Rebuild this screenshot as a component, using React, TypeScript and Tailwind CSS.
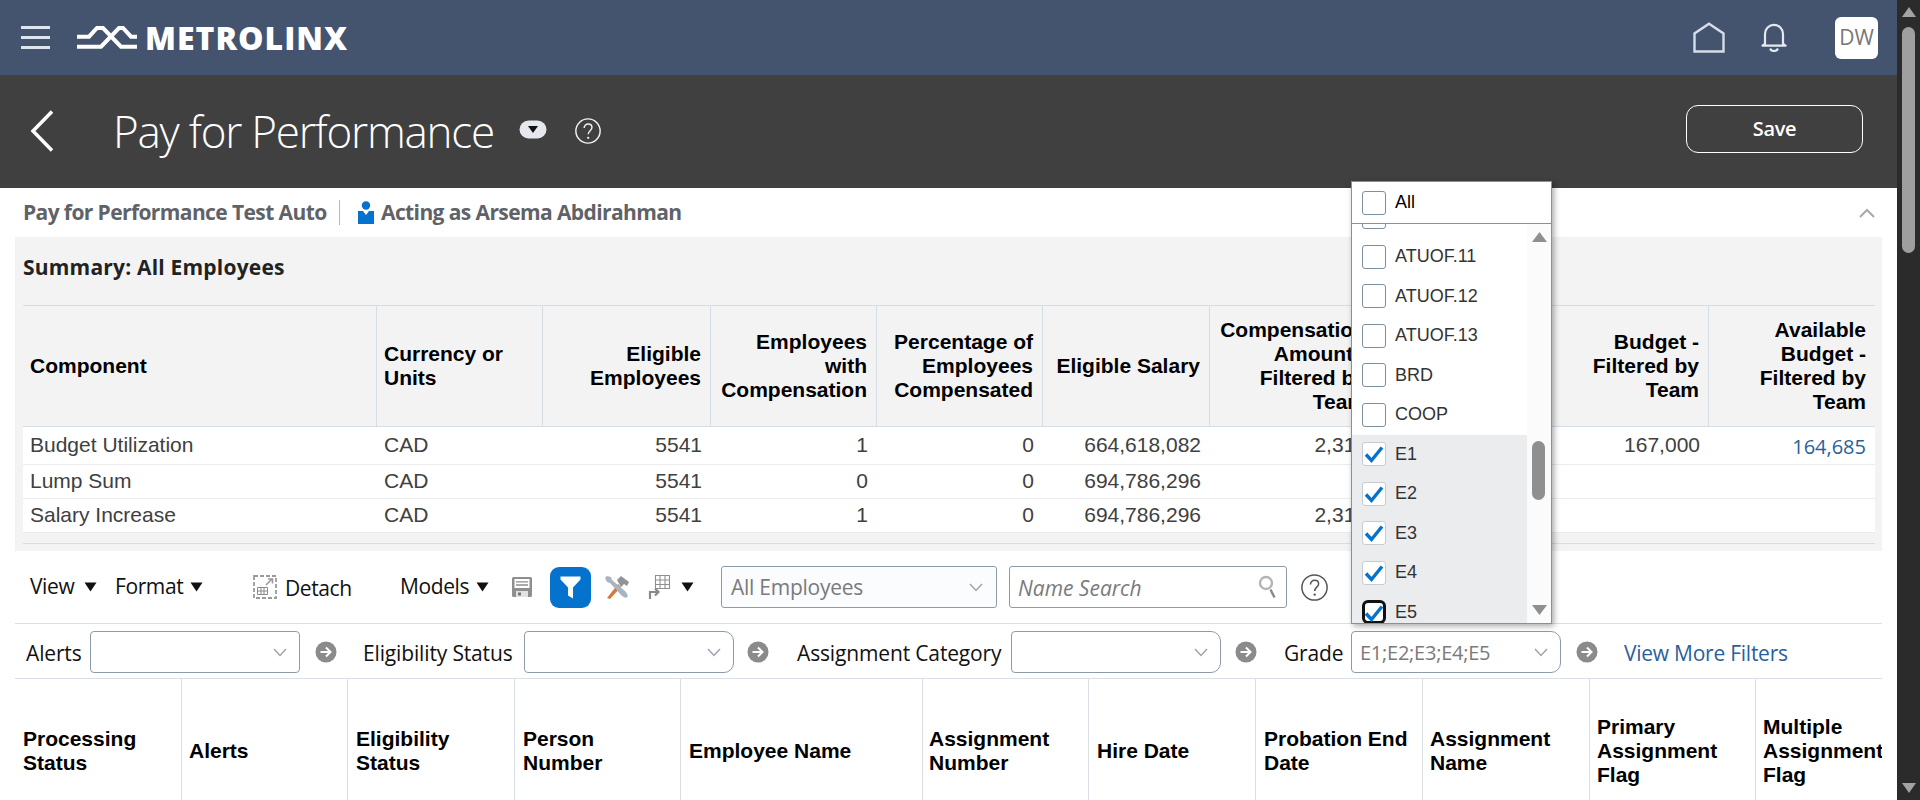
import React from "react";

const seg = "font-['Open_Sans','Noto_Sans',sans-serif]";
const ari = "font-['Liberation_Sans',Arial,sans-serif]";

function Tri({ className = "" }: { className?: string }) {
  return (
    <svg width="13" height="10" viewBox="0 0 13 10" className={"shrink-0 " + className}>
      <path d="M0.500 0.500h12L6.500 9.500z" fill="#111" />
    </svg>
  );
}
function Chev({ color = "#9aa3ad" }: { color?: string }) {
  return (
    <svg width="14" height="9" viewBox="0 0 14 9" className="shrink-0">
      <path d="M1 1l6 6.500L13 1" fill="none" stroke={color} strokeWidth="1.400" />
    </svg>
  );
}
function Go({ className = "" }: { className?: string }) {
  return (
    <svg width="22" height="22" viewBox="0 0 22 22" className={"shrink-0 " + className}>
      <circle cx="11" cy="11" r="10.500" fill="#8b8b8b" />
      <path d="M5.500 11h10M11 6.500l4.500 4.500-4.500 4.500" fill="none" stroke="#fff" strokeWidth="2" />
    </svg>
  );
}
function Help({ size = 27, color = "#555" }: { size?: number; color?: string }) {
  return (
    <svg width={size} height={size} viewBox="0 0 27 27" className="shrink-0">
      <circle cx="13.500" cy="13.500" r="12.600" fill="none" stroke={color} strokeWidth="1.500" />
      <path d="M9.500 10.500c0-2.600 1.800-4.200 4.100-4.200 2.400 0 4 1.600 4 3.600 0 3-3.900 3.600-3.900 7" fill="none" stroke={color} strokeWidth="1.500" />
      <circle cx="13.700" cy="20.600" r="1.200" fill={color} />
    </svg>
  );
}
function Box({ on, focus }: { on?: boolean; focus?: boolean }) {
  return (
    <span
      className={
        "relative block w-[24px] h-[24px] shrink-0 rounded-[3px] bg-white " +
        (focus ? "border-[3px] border-[#111] rounded-[6px]" : on ? "border border-[#c6ccd2]" : "border border-[#7e8f9e]")
      }
    >
      {on && (
        <svg width="22" height="20" viewBox="0 0 22 20" className={"absolute " + (focus ? "left-[-2px] top-0" : "left-0 top-[1px]")}>
          <path d="M3 10.500l5.500 6L19 3.500" fill="none" stroke="#0572ce" strokeWidth="3.400" />
        </svg>
      )}
    </span>
  );
}

const sumCols: { t: string[]; left?: boolean; w: number }[] = [
  { t: ["Component"], left: true, w: 354 },
  { t: ["Currency or", "Units"], left: true, w: 166 },
  { t: ["Eligible", "Employees"], w: 168 },
  { t: ["Employees", "with", "Compensation"], w: 166 },
  { t: ["Percentage of", "Employees", "Compensated"], w: 166 },
  { t: ["Eligible Salary"], w: 167 },
  { t: ["Compensation", "Amount -", "Filtered by", "Team"], w: 166 },
  { t: ["Budget"], w: 166 },
  { t: ["Budget -", "Filtered by", "Team"], w: 167 },
  { t: ["Available", "Budget -", "Filtered by", "Team"], w: 166 },
];
const sumRows: { h: string; c: string[] }[] = [
  { h: "h-[38px]", c: ["Budget Utilization", "CAD", "5541", "1", "0", "664,618,082", "2,315", "", "167,000", "164,685"] },
  { h: "h-[34px]", c: ["Lump Sum", "CAD", "5541", "0", "0", "694,786,296", "", "", "", ""] },
  { h: "h-[34px]", c: ["Salary Increase", "CAD", "5541", "1", "0", "694,786,296", "2,315", "", "", ""] },
];

const empCols: { t: string[]; w: string; pl: string }[] = [
  { t: ["Processing", "Status"], w: "w-[167px]", pl: "pl-[8px]" },
  { t: ["Alerts"], w: "w-[166px]", pl: "pl-[7px]" },
  { t: ["Eligibility", "Status"], w: "w-[167px]", pl: "pl-[8px]" },
  { t: ["Person", "Number"], w: "w-[166px]", pl: "pl-[8px]" },
  { t: ["Employee Name"], w: "w-[242px]", pl: "pl-[8px]" },
  { t: ["Assignment", "Number"], w: "w-[166px]", pl: "pl-[6px]" },
  { t: ["Hire Date"], w: "w-[167px]", pl: "pl-[8px]" },
  { t: ["Probation End", "Date"], w: "w-[167px]", pl: "pl-[8px]" },
  { t: ["Assignment", "Name"], w: "w-[167px]", pl: "pl-[7px]" },
  { t: ["Primary", "Assignment", "Flag"], w: "w-[166px]", pl: "pl-[7px]" },
  { t: ["Multiple", "Assignment", "Flag"], w: "w-[127px]", pl: "pl-[7px]" },
];

function Filter({ label, labelW, value, cut, gap }: { label: string; labelW: string; value?: string; cut?: boolean; gap: string }) {
  return (
    <div className="flex items-center">
      <span className={labelW + " whitespace-nowrap pt-[3px] text-[21px] tracking-[-0.15px] text-[#111] " + seg}>{label}</span>
      <div
        className={
          gap +
          " w-[210px] h-[42px] flex items-center justify-between pl-[8px] pr-[12px] bg-white border border-[#8d9ba8] rounded-[4px] " +
          (cut ? "rounded-r-[10px]" : "")
        }
      >
        <span className={"pt-[2px] text-[20px] tracking-[-0.25px] text-[#7a7a7a] " + seg}>{value}</span>
        <Chev />
      </div>
    </div>
  );
}

const items: { t: string; on?: boolean; focus?: boolean }[] = [
  { t: "ATUOF.11" },
  { t: "ATUOF.12" },
  { t: "ATUOF.13" },
  { t: "BRD" },
  { t: "COOP" },
  { t: "E1", on: true },
  { t: "E2", on: true },
  { t: "E3", on: true },
  { t: "E4", on: true },
  { t: "E5", on: true, focus: true },
];

function Dropdown() {
  return (
    <div className={"absolute left-[1351px] top-[181px] w-[201px] h-[443px] bg-white border border-[#7e93a6] shadow-[2px_2px_6px_rgba(0,0,0,0.35)] flex flex-col overflow-hidden " + ari}>
      <div className="h-[42px] shrink-0 flex items-center pl-[10px] gap-[9px] border-b border-[#7e93a6] text-[18px] text-black">
        <Box /> <span>All</span>
      </div>
      <div className="flex-1 flex min-h-0">
        <div className="w-[175px] flex flex-col overflow-hidden">
          <div className="h-[13px] shrink-0 relative overflow-hidden">
            <span className="absolute left-[10px] top-[-19px] w-[24px] h-[24px] border border-[#7e8f9e] rounded-[3px]" />
          </div>
          {items.map((it) => (
            <div key={it.t} className={"h-[39.500px] shrink-0 flex items-center pl-[10px] gap-[9px] text-[18px] text-[#333] " + (it.on ? "bg-[#ebecee]" : "bg-white")}>
              <Box on={it.on} focus={it.focus} />
              <span>{it.t}</span>
            </div>
          ))}
        </div>
        <div className="flex-1 bg-[#fbfbfb] relative flex flex-col items-center justify-between py-[8px]">
          <svg width="15" height="10" viewBox="0 0 15 10"><path d="M7.500 0L15 10H0z" fill="#8f8f8f" /></svg>
          <svg width="15" height="10" viewBox="0 0 15 10"><path d="M7.500 10L15 0H0z" fill="#8f8f8f" /></svg>
          <div className="absolute left-[5px] top-[217px] w-[13px] h-[59px] rounded-[7px] bg-[#8f8f8f]" />
        </div>
      </div>
    </div>
  );
}

export default function App() {
  return (
    <div className="relative flex w-[1920px] h-[800px] overflow-hidden bg-white">
      <div className="w-[1897px] h-[800px] shrink-0 flex flex-col overflow-hidden">
        {/* blue bar */}
        <div className="h-[75px] shrink-0 bg-[#44546f] flex items-center">
          <div className="ml-[21px] w-[29px] flex flex-col gap-[7.500px]">
            <span className="block h-[2.500px] bg-[#dfe5ee]" />
            <span className="block h-[2.500px] bg-[#dfe5ee]" />
            <span className="block h-[2.500px] bg-[#dfe5ee]" />
          </div>
          <svg width="62" height="25" viewBox="0 0 60 25" className="ml-[26px]">
            <g fill="none" stroke="#fff" strokeWidth="4">
              <path d="M0 11.700H12L20 3H26L44 21.700H60" />
              <path d="M0 21.700H24L42 3H46L54 11.700H60" />
            </g>
          </svg>
          <span className="ml-[7px] text-[32px] leading-none font-extrabold text-white tracking-[1px] font-['Open_Sans',sans-serif]">METROLINX</span>
          <div className="flex-1" />
          <svg width="32" height="31" viewBox="0 0 32 31" className="mr-[36px]">
            <path d="M1.500 29.500V11.500L16 1.800l14.500 9.700v18z" fill="none" stroke="#d5deea" strokeWidth="2.400" />
          </svg>
          <svg width="26" height="29" viewBox="0 0 26 29" className="mr-[48px]">
            <path d="M4 21V11c0-5.200 4-9.200 9-9.200s9 4 9 9.200v10l2.600 1.600H1.400z" fill="none" stroke="#e4e9f1" strokeWidth="2.200" strokeLinejoin="round" />
            <path d="M9 25.600c1 1.800 2.400 2.400 4 2.400s3-.6 4-2.400" fill="none" stroke="#e4e9f1" strokeWidth="2.200" />
          </svg>
          <div className={"w-[43px] h-[42px] mr-[19px] rounded-[6px] bg-white flex items-center justify-center text-[21px] text-[#777] " + seg}>DW</div>
        </div>
        {/* dark bar */}
        <div className="h-[113px] shrink-0 bg-[#404040] flex items-center">
          <svg width="24" height="42" viewBox="0 0 24 42" className="ml-[30px] mb-[2px]">
            <path d="M22 1.500L3 21l19 19.500" fill="none" stroke="#fff" strokeWidth="3.500" />
          </svg>
          <span className={"ml-[59px] mb-[2px] w-[379px] whitespace-nowrap text-[44px] font-light text-white leading-none tracking-[-1.250px] " + seg}>Pay for Performance</span>
          <svg width="28" height="19" viewBox="0 0 28 19" className="ml-[27px] mb-[4px]">
            <rect x="0.500" y="0.500" width="27" height="18" rx="9" fill="#e5e9ee" />
            <path d="M9 6h10l-5 7z" fill="#111" />
          </svg>
          <span className="ml-[28px] flex mb-[2px]"><Help size={26} color="#f0f0f0" /></span>
          <div className="flex-1" />
          <div className={"w-[177px] h-[48px] mr-[34px] mb-[5px] rounded-[12px] border border-white flex items-center justify-center text-[20px] font-semibold tracking-[-0.3px] text-white " + seg}>Save</div>
        </div>
        {/* context row */}
        <div className={"h-[49px] shrink-0 flex items-center pl-[23px] text-[21px] tracking-[-0.6px] font-bold text-[#5f6368] " + seg}>
          <span className="w-[301px] whitespace-nowrap">Pay for Performance Test Auto</span>
          <span className="ml-[15px] w-px h-[25px] bg-[#b9b9a8]" />
          <svg width="16" height="23" viewBox="0 0 16 23" className="ml-[18px]">
            <circle cx="8" cy="4.500" r="4.200" fill="#0572ce" />
            <path d="M0 10h5l3 4 3-4h5v13H0z" fill="#0572ce" />
          </svg>
          <span className="ml-[7px] whitespace-nowrap">Acting as Arsema Abdirahman</span>
          <div className="flex-1" />
          <svg width="16" height="10" viewBox="0 0 16 10" className="mr-[22px]">
            <path d="M1 9l7-7 7 7" fill="none" stroke="#a8a8a8" strokeWidth="2" />
          </svg>
        </div>
        {/* summary panel */}
        <div className="ml-[15px] w-[1867px] h-[314px] shrink-0 bg-[#f3f3f3] flex flex-col pl-[8px]">
          <div className={"h-[68px] shrink-0 flex items-center text-[21px] tracking-[0.2px] font-bold text-[#222] pb-[7px] " + seg}>Summary: All Employees</div>
          <div className="w-[1852px]">
            <div className="flex h-[122px] border-y border-[#d5dde5]">
              {sumCols.map((c, i) => (
                <div
                  key={i}
                  style={{ width: c.w }}
                  className={"shrink-0 pl-[7px] pr-[9px] flex flex-col justify-center text-[21px] leading-[24px] font-bold text-black " + ari + " " + (c.left ? "items-start" : "items-end") + (i < sumCols.length - 1 ? " border-r border-[#d5dde5]" : "")}
                >
                  {c.t.map((l) => <span key={l} className="whitespace-nowrap">{l}</span>)}
                </div>
              ))}
            </div>
            {sumRows.map((r, ri) => (
              <div key={ri} className={"flex bg-white border-b border-[#ececec] " + r.h}>
                {r.c.map((v, i) => (
                  <div
                    key={i}
                    style={{ width: sumCols[i].w }}
                    className={
                      "shrink-0 pl-[7px] pr-[9px] flex items-center whitespace-nowrap " +
                      (i === 9
                        ? seg + " text-[20px] pt-[3px] text-[#2a5f9e] justify-end"
                        : ari + " text-[21px] pb-[2px] text-[#404040]" + (sumCols[i].left ? " justify-start" : " justify-end"))
                    }
                  >
                    {v}
                  </div>
                ))}
              </div>
            ))}
            <div className="h-[10px]" />
            <div className="h-px bg-[#d5dde5]" />
          </div>
        </div>
        {/* toolbar */}
        <div className={"ml-[15px] w-[1867px] h-[73px] shrink-0 border-b border-[#d9dfe5] flex items-center text-[21px] tracking-[-0.4px] text-[#111] " + seg}>
          <span className="ml-[15px] w-[45px]">View</span>
          <Tri className="ml-[9px]" />
          <span className="ml-[18px] w-[66px] whitespace-nowrap">Format</span>
          <Tri className="ml-[9px]" />
          <svg width="24" height="24" viewBox="0 0 24 24" className="ml-[50px] shrink-0">
            <rect x="1" y="1" width="22" height="22" fill="none" stroke="#9a9a9a" strokeWidth="1.800" strokeDasharray="4 2" />
            <path d="M13 10l6-6M15 4h4.500v4.500" fill="none" stroke="#9a9a9a" strokeWidth="1.600" />
            <path d="M4.500 12.500h10v7h-10zM4.500 16h10M8 12.500v7M11 12.500v7" fill="none" stroke="#8a8a8a" strokeWidth="1" />
          </svg>
          <span className="ml-[8px] mt-[3px] w-[66px]">Detach</span>
          <span className="ml-[49px] w-[67px]">Models</span>
          <Tri className="ml-[9px]" />
          <svg width="22" height="22" viewBox="0 0 22 22" className="ml-[22px] shrink-0">
            <path d="M1 2.500A1.500 1.500 0 0 1 2.500 1h17A1.500 1.500 0 0 1 21 2.500v17a1.500 1.500 0 0 1-1.500 1.500h-17A1.500 1.500 0 0 1 1 19.500z" fill="#8f8f8f" />
            <rect x="3.500" y="3" width="15" height="9" fill="#fff" />
            <path d="M5 5.800h12M5 9h12" stroke="#8f8f8f" strokeWidth="1.300" />
            <rect x="5" y="15" width="12" height="6" fill="#e2e2e2" />
            <rect x="7" y="16.500" width="3" height="3" fill="#777" />
          </svg>
          <div className="ml-[17px] w-[41px] h-[41px] shrink-0 rounded-[9px] bg-[#0572ce] flex items-center justify-center">
            <svg width="21" height="23" viewBox="0 0 21 23"><path d="M0.500 0.500h20v3L13 11.500v11l-5-3v-8L0.500 3.500z" fill="#fff" /></svg>
          </div>
          <svg width="26" height="24" viewBox="0 0 26 24" className="ml-[13px] shrink-0">
            <path d="M3 23L14 9l3 3L6 24z" fill="#d27a3c" />
            <path d="M13 5l4-4 8 6-2 4-3-2-3 3z" fill="#8f949a" />
            <path d="M3 1l4 1 1 3 14 12 2 4-2 2-4-2L6 8 3 7 1 3z" fill="#a9b4bf" />
          </svg>
          <svg width="26" height="25" viewBox="0 0 26 25" className="ml-[17px] shrink-0">
            <path d="M8.500 0.500h14v13h-14zM8.500 5h14M8.500 9.500h14M13 0.500v13M18 0.500v13" fill="none" stroke="#8f8f8f" strokeWidth="1.100" />
            <path d="M3 24v-7h8M8 13.500l3.500 3.500-3.500 3.500" fill="none" stroke="#8a8a8a" strokeWidth="2.200" />
          </svg>
          <Tri className="ml-[8px]" />
          <div className="ml-[27px] w-[276px] h-[42px] shrink-0 flex items-center justify-between pl-[9px] pr-[13px] border border-[#8d9ba8] rounded-[3px] bg-[#fbfcfe]">
            <span className="pt-[2px] text-[21px] tracking-[-0.25px] text-[#7a7a7a]">All Employees</span>
            <Chev />
          </div>
          <div className="ml-[12px] w-[278px] h-[42px] shrink-0 flex items-center justify-between pl-[8px] pr-[8px] border border-[#8d9ba8] rounded-[3px]">
            <span className="pt-[3px] text-[21px] tracking-[0px] italic text-[#7a7a7a]">Name Search</span>
            <svg width="20" height="24" viewBox="0 0 20 24">
              <circle cx="8" cy="8" r="6" fill="none" stroke="#b4b4b4" strokeWidth="2.400" />
              <path d="M12.500 14.500l4 8" stroke="#8a8a8a" strokeWidth="2.400" />
            </svg>
          </div>
          <span className="ml-[14px] flex"><Help size={27} color="#555" /></span>
        </div>
        {/* filters */}
        <div className="ml-[15px] w-[1867px] h-[55px] shrink-0 border-b border-[#d9dfe5] flex items-center pl-[11px] pt-[2px]">
          <Filter label="Alerts" labelW="w-[55px]" gap="ml-[9px]" />
          <Go className="ml-[15px]" />
          <div className="ml-[26px]"><Filter label="Eligibility Status" labelW="w-[150px]" gap="ml-[11px]" cut /></div>
          <Go className="ml-[13px]" />
          <div className="ml-[28px]"><Filter label="Assignment Category" labelW="w-[204px]" gap="ml-[10px]" cut /></div>
          <Go className="ml-[14px]" />
          <div className="ml-[27px]"><Filter label="Grade" labelW="w-[57px]" gap="ml-[10px]" value="E1;E2;E3;E4;E5" cut /></div>
          <Go className="ml-[15px]" />
          <span className={"ml-[26px] pt-[3px] text-[21px] tracking-[-0.25px] text-[#2a5f9e] whitespace-nowrap " + seg}>View More Filters</span>
        </div>
        {/* employee header */}
        <div className={"ml-[15px] w-[1867px] h-[144px] shrink-0 flex overflow-hidden " + ari}>
          {empCols.map((c, i) => (
            <div key={i} className={c.w + " " + c.pl + " shrink-0 flex flex-col justify-center text-[21px] leading-[24px] font-bold text-black" + (i < empCols.length - 1 ? " border-r border-[#d9dfe5]" : "")}>
              {c.t.map((l) => <span key={l} className="whitespace-nowrap">{l}</span>)}
            </div>
          ))}
        </div>
      </div>
      {/* scrollbar */}
      <div className="flex-1 bg-[#2b2b2b] flex flex-col items-center py-[7px] relative">
        <svg width="14" height="10" viewBox="0 0 14 10"><path d="M7 0l7 10H0z" fill="#a3a3a3" /></svg>
        <div className="flex-1" />
        <svg width="14" height="10" viewBox="0 0 14 10"><path d="M7 10l7-10H0z" fill="#a3a3a3" /></svg>
        <div className="absolute left-[5px] top-[27px] w-[13px] h-[226px] rounded-[7px] bg-[#9f9f9f]" />
      </div>
      <Dropdown />
    </div>
  );
}
